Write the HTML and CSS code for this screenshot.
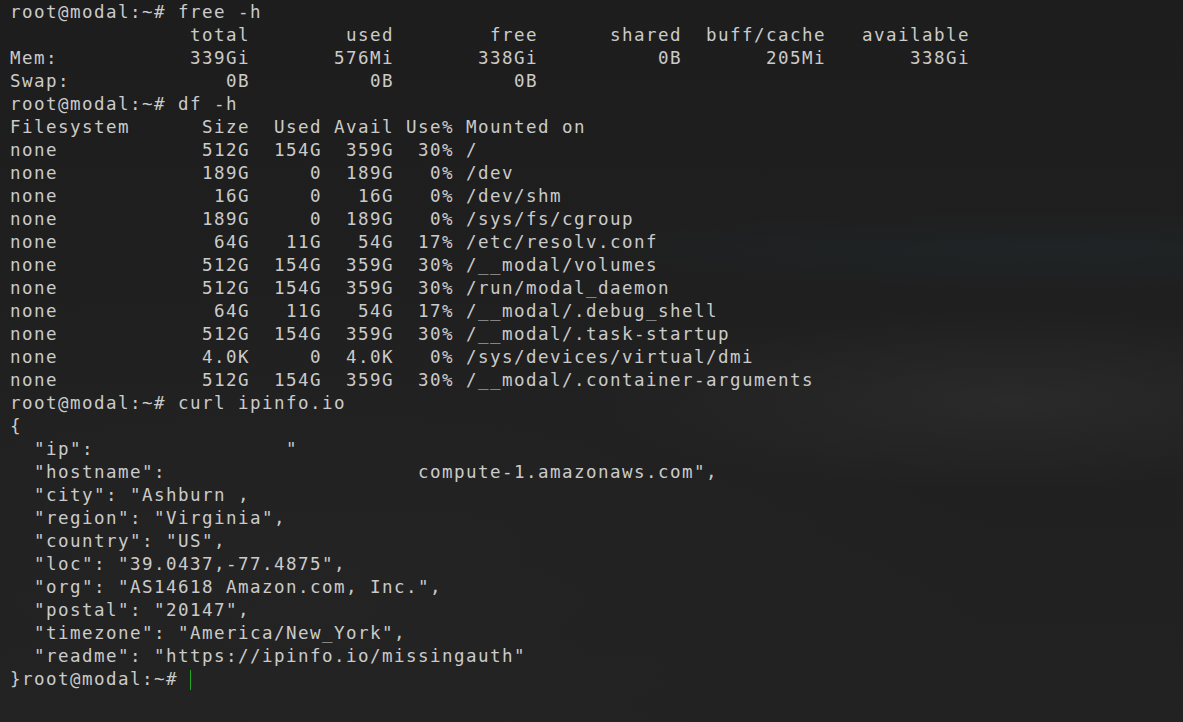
FILE: index.html
```html
<!DOCTYPE html>
<html lang="en">
<head>
<meta charset="utf-8">
<title>root@modal</title>
<link rel="stylesheet" href="styles.css">
</head>
<body>
<main class="terminal">
<pre class="output">root@modal:~# free -h
               total        used        free      shared  buff/cache   available
Mem:           339Gi       576Mi       338Gi          0B       205Mi       338Gi
Swap:             0B          0B          0B
root@modal:~# df -h
Filesystem      Size  Used Avail Use% Mounted on
none            512G  154G  359G  30% /
none            189G     0  189G   0% /dev
none             16G     0   16G   0% /dev/shm
none            189G     0  189G   0% /sys/fs/cgroup
none             64G   11G   54G  17% /etc/resolv.conf
none            512G  154G  359G  30% /__modal/volumes
none            512G  154G  359G  30% /run/modal_daemon
none             64G   11G   54G  17% /__modal/.debug_shell
none            512G  154G  359G  30% /__modal/.task-startup
none            4.0K     0  4.0K   0% /sys/devices/virtual/dmi
none            512G  154G  359G  30% /__modal/.container-arguments
root@modal:~# curl ipinfo.io
{
  "ip":                "
  "hostname":                     compute-1.amazonaws.com",
  "city": "Ashburn ,
  "region": "Virginia",
  "country": "US",
  "loc": "39.0437,-77.4875",
  "org": "AS14618 Amazon.com, Inc.",
  "postal": "20147",
  "timezone": "America/New_York",
  "readme": "https://ipinfo.io/missingauth"
}root@modal:~# <span class="cursor"></span></pre>
</main>
</body>
</html>
```

FILE: styles.css
```css
html, body {
  margin: 0;
  padding: 0;
  height: 100%;
}

body {
  background-color: #1f1f1f;
  overflow: hidden;
}

.terminal {
  height: 722px;
  box-sizing: border-box;
  padding: 1px 0 0 10px;
  background:
    radial-gradient(ellipse 420px 90px at 1010px 400px, rgba(52, 52, 52, 0.5), rgba(52, 52, 52, 0) 100%),
    radial-gradient(ellipse 500px 40px at 1050px 250px, rgba(30, 40, 44, 0.55), rgba(30, 40, 44, 0) 100%),
    radial-gradient(ellipse 700px 300px at 300px 560px, rgba(40, 40, 40, 0.35), rgba(40, 40, 40, 0) 100%),
    linear-gradient(180deg, #1d1d1d 0%, #1f1f1f 40%, #222222 100%);
}

.output {
  margin: 0;
  font-family: "DejaVu Sans Mono", "Liberation Mono", monospace;
  font-size: 17.5px;
  letter-spacing: 1.464px;
  line-height: 23px;
  color: #cbcbcb;
  white-space: pre;
}

.cursor {
  display: inline-block;
  width: 1px;
  height: 20px;
  background: #22a822;
  vertical-align: -5px;
}
```
